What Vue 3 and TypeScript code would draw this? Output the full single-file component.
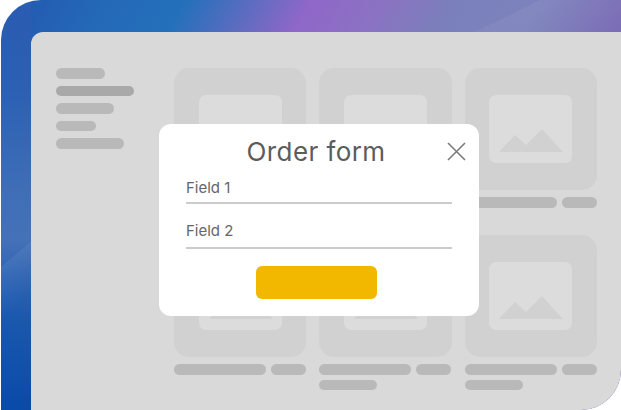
<template>
  <div class="frame">
    <div class="panel">
      <aside class="sidebar">
        <div
          v-for="item in sideItems"
          :key="item.width"
          class="bar"
          :class="{ dark: item.dark }"
          :style="{ width: item.width + 'px' }"
        ></div>
      </aside>

      <main class="grid">
        <div v-for="(card, i) in cards" :key="i" class="cell">
          <div class="card">
            <div class="thumb">
              <svg width="83" height="68" viewBox="0 0 83 68">
                <polygon points="10,57 26,40 37,50 53,34 74,57" fill="#d1d1d1" />
              </svg>
            </div>
          </div>
          <div class="bars">
            <div class="bar wide"></div>
            <div class="bar small"></div>
            <div v-if="card" class="bar third"></div>
          </div>
        </div>
      </main>

      <section class="modal">
        <h2 class="title">Order form</h2>
        <svg class="close" width="19" height="19" viewBox="0 0 19 19">
          <path d="M1 1 L18 18 M18 1 L1 18" stroke="#7a7a7a" stroke-width="1.6" fill="none" />
        </svg>
        <div class="field first">Field 1</div>
        <div class="field second">Field 2</div>
        <button class="submit" type="button"></button>
      </section>
    </div>
  </div>
</template>

<script setup lang="ts">
const sideItems = [
  { width: 49, dark: false },
  { width: 78, dark: true },
  { width: 58, dark: false },
  { width: 40, dark: false },
  { width: 68, dark: false },
];

// true = carte avec une deuxieme ligne sous le visuel
const cards: boolean[] = [false, false, false, false, true, true];
</script>

<style>
html,
body {
  margin: 0;
  background: #fff;
}
</style>

<style scoped>
.frame {
  box-sizing: border-box;
  width: 620px;
  height: 410px;
  margin-left: 1px;
  padding: 32px 0 0 30px;
  overflow: hidden;
  border-radius: 40px 0 40px 0;
  background:
    linear-gradient(140deg, transparent 0 204px, rgba(255, 255, 255, 0.06) 205px, transparent 245px) 0 0 / 30px 100% no-repeat,
    linear-gradient(180deg, #2a5cb2 0, #2b60b3 90px, #3f6eb7 190px, #4571b8 240px, #2f64b3 275px, #1a58ae 320px, #0a4aa8 410px) 0 0 / 30px 100% no-repeat,
    linear-gradient(154deg, transparent 0 236px, rgba(255, 255, 255, 0.05) 237px, transparent 325px),
    linear-gradient(120deg, #2458b0 8px, #2469b8 95px, #2470ba 160px, #5f6cc0 220px, #8f67c8 268px, #8b72c2 329px, #7a80bb 398px, #7c83bc 467px, #7a6cb5 545px);
}

.panel {
  position: relative;
  display: flex;
  gap: 40px;
  box-sizing: border-box;
  height: 378px;
  padding: 36px 24px 0 25px;
  border-radius: 12px 0 40px 0;
  background: #d9d9d9;
}

.sidebar {
  display: flex;
  flex-direction: column;
  flex: none;
  gap: 7px;
  width: 78px;
}

.bar {
  height: 10.5px;
  flex: none;
  border-radius: 6px;
  background: #b9b9b9;
}

.bar.dark {
  background: #a9a9a9;
}

.grid {
  display: grid;
  grid-template-columns: 132px 133px 131.8px;
  grid-template-rows: 167px auto;
  column-gap: 13px;
}

.card {
  display: flex;
  justify-content: center;
  box-sizing: border-box;
  height: 122px;
  padding-top: 27px;
  border-radius: 15px;
  background: #d1d1d1;
}

.thumb {
  width: 83px;
  height: 68px;
  border-radius: 7px;
  background: #dcdcdc;
}

.thumb svg {
  display: block;
}

.bars {
  display: flex;
  flex-wrap: wrap;
  gap: 5px 4.5px;
  margin-top: 7px;
}

.bar.wide {
  width: 92px;
}

.bar.small {
  width: 35px;
}

.bar.third {
  width: 58px;
}

.modal {
  position: absolute;
  left: 128px;
  top: 92px;
  box-sizing: border-box;
  width: 320px;
  height: 192px;
  padding: 12px 27px 0;
  border-radius: 12px;
  background: #fff;
  color: #666;
  font-family: "Inter", "Liberation Sans", sans-serif;
}

.title {
  margin: 0 6px 0 0;
  font-size: 26px;
  font-weight: 400;
  line-height: 32px;
  letter-spacing: 0.4px;
  text-align: center;
  color: #5c5c5c;
}

.close {
  position: absolute;
  left: 288px;
  top: 18px;
}

.field {
  box-sizing: border-box;
  font-size: 15px;
  line-height: 20px;
  border-bottom: 2px solid #cbcbcb;
}

.field.first {
  height: 36px;
  padding-top: 10px;
}

.field.second {
  height: 45px;
  padding-top: 17px;
}

.submit {
  display: block;
  width: 121px;
  height: 33px;
  margin: 17px 0 0 70px;
  padding: 0;
  border: 0;
  border-radius: 6px;
  background: #f2b800;
}
</style>
